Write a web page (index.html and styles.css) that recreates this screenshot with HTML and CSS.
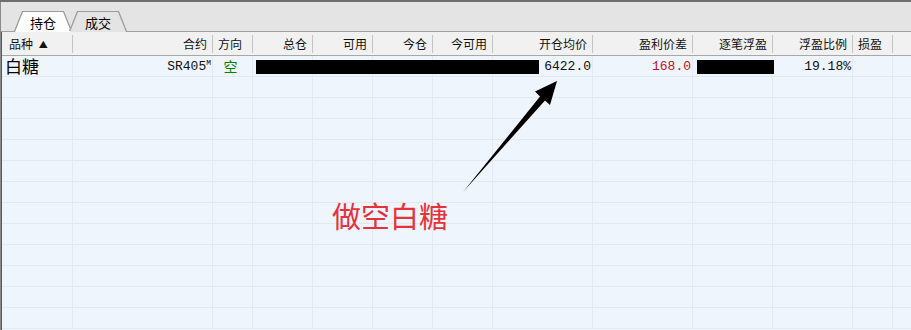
FILE: index.html
```html
<!DOCTYPE html>
<html lang="zh">
<head>
<meta charset="utf-8">
<title>持仓</title>
<link rel="stylesheet" href="styles.css">
</head>
<body>
<div class="topbar"></div>
<div class="frame">
  <div class="tabs">
    <div class="tab active"><span>持仓</span></div>
    <div class="tab"><span>成交</span></div>
  </div>
  <div class="grid">
    <div class="hrow">
      <div class="hc left first">品种 <span class="sort">▲</span></div>
      <div class="hc">合约</div>
      <div class="hc left">方向</div>
      <div class="hc">总仓</div>
      <div class="hc">可用</div>
      <div class="hc">今仓</div>
      <div class="hc">今可用</div>
      <div class="hc">开仓均价</div>
      <div class="hc">盈利价差</div>
      <div class="hc">逐笔浮盈</div>
      <div class="hc">浮盈比例</div>
      <div class="hc left">损盈</div>
      <div class="hc fill"></div>
    </div>
    <div class="row data">
      <div class="c name">白糖</div>
      <div class="c num">SR405<sup>M</sup></div>
      <div class="c dir">空</div>
      <div class="c"></div>
      <div class="c"></div>
      <div class="c"></div>
      <div class="c"></div>
      <div class="c num">6422.0</div>
      <div class="c num red">168.0</div>
      <div class="c"></div>
      <div class="c num">19.18%</div>
      <div class="c"></div>
      <div class="c fill"></div>
      <div class="mask m1"></div>
      <div class="mask m2"></div>
    </div>
    <div class="row"><div class="c"></div><div class="c"></div><div class="c"></div><div class="c"></div><div class="c"></div><div class="c"></div><div class="c"></div><div class="c"></div><div class="c"></div><div class="c"></div><div class="c"></div><div class="c"></div><div class="c fill"></div></div>
    <div class="row"><div class="c"></div><div class="c"></div><div class="c"></div><div class="c"></div><div class="c"></div><div class="c"></div><div class="c"></div><div class="c"></div><div class="c"></div><div class="c"></div><div class="c"></div><div class="c"></div><div class="c fill"></div></div>
    <div class="row"><div class="c"></div><div class="c"></div><div class="c"></div><div class="c"></div><div class="c"></div><div class="c"></div><div class="c"></div><div class="c"></div><div class="c"></div><div class="c"></div><div class="c"></div><div class="c"></div><div class="c fill"></div></div>
    <div class="row"><div class="c"></div><div class="c"></div><div class="c"></div><div class="c"></div><div class="c"></div><div class="c"></div><div class="c"></div><div class="c"></div><div class="c"></div><div class="c"></div><div class="c"></div><div class="c"></div><div class="c fill"></div></div>
    <div class="row"><div class="c"></div><div class="c"></div><div class="c"></div><div class="c"></div><div class="c"></div><div class="c"></div><div class="c"></div><div class="c"></div><div class="c"></div><div class="c"></div><div class="c"></div><div class="c"></div><div class="c fill"></div></div>
    <div class="row"><div class="c"></div><div class="c"></div><div class="c"></div><div class="c"></div><div class="c"></div><div class="c"></div><div class="c"></div><div class="c"></div><div class="c"></div><div class="c"></div><div class="c"></div><div class="c"></div><div class="c fill"></div></div>
    <div class="row"><div class="c"></div><div class="c"></div><div class="c"></div><div class="c"></div><div class="c"></div><div class="c"></div><div class="c"></div><div class="c"></div><div class="c"></div><div class="c"></div><div class="c"></div><div class="c"></div><div class="c fill"></div></div>
    <div class="row"><div class="c"></div><div class="c"></div><div class="c"></div><div class="c"></div><div class="c"></div><div class="c"></div><div class="c"></div><div class="c"></div><div class="c"></div><div class="c"></div><div class="c"></div><div class="c"></div><div class="c fill"></div></div>
    <div class="row"><div class="c"></div><div class="c"></div><div class="c"></div><div class="c"></div><div class="c"></div><div class="c"></div><div class="c"></div><div class="c"></div><div class="c"></div><div class="c"></div><div class="c"></div><div class="c"></div><div class="c fill"></div></div>
    <div class="row"><div class="c"></div><div class="c"></div><div class="c"></div><div class="c"></div><div class="c"></div><div class="c"></div><div class="c"></div><div class="c"></div><div class="c"></div><div class="c"></div><div class="c"></div><div class="c"></div><div class="c fill"></div></div>
    <div class="row"><div class="c"></div><div class="c"></div><div class="c"></div><div class="c"></div><div class="c"></div><div class="c"></div><div class="c"></div><div class="c"></div><div class="c"></div><div class="c"></div><div class="c"></div><div class="c"></div><div class="c fill"></div></div>
    <div class="row"><div class="c"></div><div class="c"></div><div class="c"></div><div class="c"></div><div class="c"></div><div class="c"></div><div class="c"></div><div class="c"></div><div class="c"></div><div class="c"></div><div class="c"></div><div class="c"></div><div class="c fill"></div></div>
  </div>
</div>
<svg class="arrow" width="911" height="330" viewBox="0 0 911 330">
  <polygon points="463,192 540,96.5 535,91.5 557,81 550,105 545,100.5" fill="#000"/>
</svg>
<div class="note">做空白糖</div>
</body>
</html>
```
FILE: styles.css
```css
html, body {
  margin: 0;
  padding: 0;
}
body {
  width: 911px;
  height: 330px;
  overflow: hidden;
  background: #e6e6e6;
  font-family: "Noto Sans CJK SC", "Liberation Sans", sans-serif;
  font-size: 12px;
  color: #000;
  position: relative;
}
.topbar {
  height: 2px;
  background: #6e6e6e;
}
.frame {
  border-left: 1px solid #8a8a8a;
  height: 328px;
  display: flex;
  flex-direction: column;
}
.tabs {
  height: 30px;
  display: flex;
  align-items: flex-end;
  padding-left: 13px;
  box-sizing: border-box;
  border-bottom: 1px solid #a0a0a0;
  background: #e4e4e4;
}
.tab {
  position: relative;
  width: 58px;
  height: 20px;
  margin-right: -3px;
  display: flex;
  align-items: center;
  justify-content: center;
}
.tab::before, .tab::after {
  content: "";
  position: absolute;
  left: 0;
  top: 0;
  right: 0;
  bottom: 0;
  clip-path: polygon(8px 0, calc(100% - 8px) 0, 100% 100%, 0 100%);
}
.tab::before {
  background: #9c9c9c;
}
.tab::after {
  background: #e4e4e4;
  left: 1px;
  right: 1px;
  top: 1px;
  bottom: -1px;
}
.tab.active::after {
  background: #ffffff;
}
.tab span {
  position: relative;
  z-index: 1;
  font-size: 13px;
  line-height: 1;
  margin-top: 3px;
}
.grid {
  flex: 1;
  display: flex;
  flex-direction: column;
  background: #eff5fd;
  border-left: 1px solid #5a5a5a;
}
.hrow, .row {
  display: grid;
  grid-template-columns: 71px 140px 40px 60px 60px 60px 60px 100px 100px 80px 80px 40px 1fr;
}
.hrow {
  height: 24px;
  background: #f1f1f1;
  border-bottom: 1px solid #a8a8a8;
  box-sizing: border-box;
  align-items: center;
}
.hc {
  height: 18px;
  line-height: 18px;
  border-right: 1px solid #c4c4c4;
  text-align: right;
  padding-right: 5px;
  white-space: nowrap;
  color: #111;
}
.hc.left {
  text-align: left;
  padding-left: 5px;
  padding-right: 0;
}
.hc.first {
  padding-left: 7px;
}
.sort {
  font-size: 9px;
  margin-left: 3px;
  vertical-align: 1px;
}
.hc.fill {
  border-right: none;
}
.row {
  height: 21px;
  border-bottom: 1px solid #e2e9f2;
  box-sizing: border-box;
  position: relative;
}
.c {
  border-right: 1px solid #e2e9f2;
  white-space: nowrap;
  line-height: 20px;
}
.c.fill {
  border-right: none;
}
.data .c.name {
  font-size: 17px;
  padding-left: 3px;
  line-height: 20px;
}
.data .c.num {
  font-family: "Liberation Mono", "DejaVu Sans Mono", monospace;
  font-size: 13px;
  text-align: right;
  padding-right: 1px;
  line-height: 22px;
  color: #111;
}
.data sup {
  font-size: 8px;
  vertical-align: 5px;
  line-height: 0;
}
.data .c.dir {
  color: #008000;
  text-align: center;
  font-size: 14px;
  padding-right: 4px;
}
.data .c.red {
  color: #c4111b;
}
.mask {
  position: absolute;
  background: #000;
  height: 14px;
  top: 4px;
}
.m1 {
  left: 254px;
  width: 283px;
}
.m2 {
  left: 695px;
  width: 77px;
}
.arrow {
  position: absolute;
  left: 0;
  top: 0;
  pointer-events: none;
}
.note {
  position: absolute;
  left: 332px;
  top: 195px;
  font-size: 29px;
  line-height: 40px;
  color: #e8323a;
}
```
